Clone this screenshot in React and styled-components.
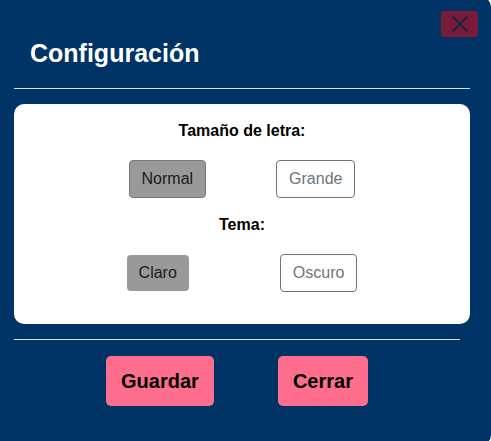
import React from "react";
import styled, { createGlobalStyle } from "styled-components";

const Global = createGlobalStyle`
  html, body { margin: 0; padding: 0; background: #ffffff; overflow: hidden; }
  body { font-family: "Liberation Sans", Arial, sans-serif; }
  * { box-sizing: border-box; }
`;

const Modal = styled.div`
  position: relative;
  margin: -3px 0 0 -10px;
  width: 501px;
  height: 448px;
  background: #003366;
  border-radius: 10px;
  padding: 42px 21px 0 24px;
`;

const CloseButton = styled.button`
  position: absolute;
  top: 14px;
  right: 13px;
  width: 37px;
  height: 26px;
  border: none;
  border-radius: 3px;
  background: #7a1b3a;
  padding: 0;
  display: flex;
  align-items: center;
  justify-content: center;
  cursor: pointer;
`;

const Title = styled.h2`
  margin: 0 0 0 16px;
  color: #ffffff;
  font-size: 25px;
  font-weight: bold;
  line-height: normal;
`;

const Divider = styled.hr`
  margin: ${(p) => p.$mt}px ${(p) => p.$mr}px 0 0;
  border: none;
  border-top: 1px solid #d9dde4;
  height: 0;
`;

const Card = styled.div`
  margin-top: 15px;
  background: #ffffff;
  border-radius: 10px;
  padding: 18px 0 32px;
  display: flex;
  flex-direction: column;
  align-items: center;
`;

const Label = styled.div`
  font-size: 16px;
  font-weight: bold;
  color: #000;
  line-height: normal;
  margin-top: ${(p) => p.$mt || 0}px;
`;

const Options = styled.div`
  display: flex;
  align-items: center;
  justify-content: center;
  gap: ${(p) => p.$gap}px;
  margin-top: 20px;
`;

const Option = styled.button`
  font-family: "Liberation Sans", Arial, sans-serif;
  font-size: 16px;
  line-height: normal;
  padding: 9px 12px;
  border-radius: 4px;
  cursor: pointer;
  background: ${(p) => (p.$active ? "#999999" : "#ffffff")};
  color: ${(p) => (p.$active ? "#1a1a1a" : "#6c757d")};
  border: ${(p) =>
    p.$active
      ? p.$bordered
        ? "1px solid #777777"
        : "none"
      : "1px solid #6c757d"};
`;

const Footer = styled.div`
  width: 446px;
  display: flex;
  justify-content: center;
  gap: 64px;
  margin-top: 16px;
`;

const ActionButton = styled.button`
  font-family: "Liberation Sans", Arial, sans-serif;
  font-size: 20px;
  font-weight: bold;
  line-height: 24px;
  padding: 13px 15px;
  border: none;
  border-radius: 5px;
  background: #ff6e8c;
  color: #000;
  cursor: pointer;
`;

export default function App() {
  return (
    <>
      <Global />
      <Modal>
        <CloseButton aria-label="Cerrar">
          <svg width="20" height="20" viewBox="0 0 20 20">
            <path d="M2.5 2.5 L17.5 17.5 M17.5 2.5 L2.5 17.5" stroke="#1c2444" strokeWidth="2" />
          </svg>
        </CloseButton>
        <Title>Configuración</Title>
        <Divider $mt={20} $mr={0} />
        <Card>
          <Label>Tamaño de letra:</Label>
          <Options $gap={70}>
            <Option $active $bordered>Normal</Option>
            <Option>Grande</Option>
          </Options>
          <Label $mt={18}>Tema:</Label>
          <Options $gap={91}>
            <Option $active>Claro</Option>
            <Option>Oscuro</Option>
          </Options>
        </Card>
        <Divider $mt={15} $mr={10} />
        <Footer>
          <ActionButton>Guardar</ActionButton>
          <ActionButton>Cerrar</ActionButton>
        </Footer>
      </Modal>
    </>
  );
}
